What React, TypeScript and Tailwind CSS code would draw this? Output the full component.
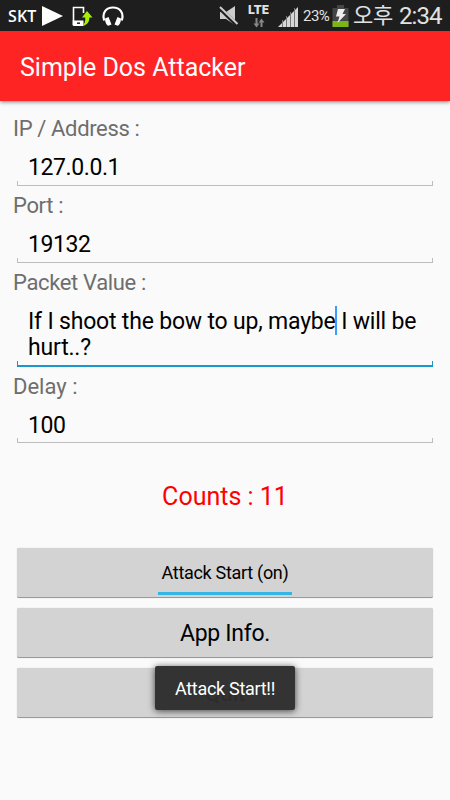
import type { ReactNode } from 'react'
import clsx from 'clsx'

interface FieldProps {
  label: string
  labelClass?: string
  boxClass?: string
  focused?: boolean
  children: ReactNode
}

function StatusBar() {
  return (
    <div className="relative h-[31px] shrink-0 bg-[#1e1e1e] text-[#e2e2e2]">
      <div className="flex h-full items-center pl-[8px]">
        <span className="w-[32px] pt-px font-['Open_Sans',sans-serif] text-[16px] font-semibold leading-none tracking-[0.1px] whitespace-nowrap text-white">SKT</span>
        <svg className="ml-[2px]" width="22" height="22" viewBox="0 0 22 22">
          <path d="M0 1v20l21-10z" fill="#fff" />
        </svg>
        <svg className="ml-[7px]" width="23" height="22" viewBox="0 0 23 22">
          <path d="M2.500 16V2.500h10V8" fill="none" stroke="#fff" strokeWidth="1.600" />
          <path d="M1.500 15.500h11V21h-10l-1-1z" fill="#fff" />
          <path d="M6 18.200h3" stroke="#1e1e1e" strokeWidth="1.500" />
          <path d="M16 6l5.500 6.500h-3.200c.2 4-2 7.800-6.800 8.200 2.300-1.900 3-4.600 2.700-8.200H11z" fill="#a8f000" />
        </svg>
        <svg className="ml-[8px]" width="22" height="22" viewBox="0 0 22 22">
          <path d="M2.200 15.500C-.2 8 4 2.500 11 2.500S22.200 8 19.800 15.500" fill="none" stroke="#fff" strokeWidth="2.200" />
          <path d="M3 13.500l3.500-1.500 3 7.500-3.200 1.300C4.500 20 3 17.500 3 13.500zM19 13.500L15.500 12l-3 7.500 3.200 1.300c1.800-.8 3.300-3.300 3.300-7.300z" fill="#fff" />
        </svg>
      </div>

      <div className="absolute inset-y-0 right-[8px] flex items-center">
        <svg width="22" height="22" viewBox="0 0 22 22">
          <path d="M2 7h6l9-6v19l-9-6H2z" fill="#ccc" />
          <path d="M1 2.500l18 17.500" stroke="#1e1e1e" strokeWidth="4" />
          <path d="M2 2l17.500 17" stroke="#ccc" strokeWidth="2" />
        </svg>
        <div className="ml-[7px] flex w-[23px] flex-col items-center">
          <span className="text-[12.5px] font-black leading-[12px] tracking-[0.2px]">LTE</span>
          <svg className="mt-[2px]" width="12" height="10" viewBox="0 0 12 10">
            <path d="M3.500 0v7M8.500 9V3" stroke="#888" strokeWidth="2" />
            <path d="M.5 5.500h6l-3 4zM5.500 4.500h6l-3-4z" fill="#888" />
          </svg>
        </div>
        <svg className="mt-[2px] ml-[7px]" width="22" height="20" viewBox="0 0 22 20">
          <path d="M1 20L21 0v20z" fill="#d6d6d6" />
          <path d="M5.500 13v7M9.500 9v11M13.500 5v15M17.500 1v19" stroke="#777" strokeWidth="1" />
        </svg>
        <span className="ml-[4px] w-[29px] pt-[2px] text-[15px] leading-none tracking-[-0.5px] whitespace-nowrap">23%</span>
        <svg width="17" height="24" viewBox="0 0 17 24">
          <path d="M5 1h7v3h4.500v19H.5V4H5z" fill="#454545" />
          <path d="M.5 17h16v6H.5z" fill="#7cb518" />
          <path d="M6 5h7l-2.500 5H14L5.500 19l2-6.500H4z" fill="#eee" />
        </svg>
        <span className="ml-[4px] w-[42px] font-['Noto_Sans_CJK_KR',sans-serif] text-[22px] font-normal leading-[33px] tracking-[-0.3px] whitespace-nowrap -translate-y-[2px]">오후</span>
        <span className="ml-[4px] w-[43px] text-[24px] leading-none tracking-[-0.9px] whitespace-nowrap">2:34</span>
      </div>
    </div>
  )
}

function Field({ label, labelClass, boxClass = 'h-[44px] tracking-[-0.4px]', focused, children }: FieldProps) {
  const line = focused ? 'border-[#1996cb]' : 'border-[#bdbdbd]'
  return (
    <div>
      <div className={clsx('pl-[13px] text-[22px] leading-[26px] tracking-[-0.35px] text-[#6e6e6e]', labelClass)}>{label}</div>
      <div className={clsx('relative mx-[17px] pt-[13px] pl-[11px] text-[23px] leading-[26px] text-black', boxClass)}>
        {children}
        <div
          className={clsx(
            'absolute inset-x-0 bottom-0 border-x',
            line,
            focused ? 'h-[6px] border-b-2' : 'h-[5px] border-b'
          )}
        />
      </div>
    </div>
  )
}

function Button({ children }: { children?: ReactNode }) {
  return (
    <button className="relative flex h-[50px] w-full items-center justify-center rounded-[2px] border-b border-[#999] bg-[#d3d3d3] text-[23px] tracking-[-0.3px] text-black shadow-[0_0_1px_#bbb]">
      {children}
    </button>
  )
}

export default function App() {
  return (
    <div className="flex h-[800px] w-[450px] flex-col overflow-hidden bg-[#fafafa] font-[Roboto,'Noto_Sans_CJK_KR',sans-serif]">
      <StatusBar />
      <header className="flex h-[70px] shrink-0 items-center bg-[#ff2424] pl-[20px] pt-[4px] text-[25px] text-white shadow-[0_1px_4px_rgba(0,0,0,0.5)]">
        <h1>Simple Dos Attacker</h1>
      </header>

      <div className="mt-[15px] flex flex-col gap-[7px]">
        <Field label="IP / Address :">127.0.0.1</Field>
        <Field label="Port :" labelClass="tracking-[-0.5px]">19132</Field>
        <Field label="Packet Value :" boxClass="h-[71px] tracking-[-0.19px]" focused>
          If I shoot the bow to up, maybe
          <span className="relative">
            <span className="absolute top-[-2px] left-[-1px] h-[29px] w-[2px] bg-[#3a9cff]" />
          </span>{' '}
          I will be<br />
          hurt..?
        </Field>
        <Field label="Delay :" labelClass="tracking-[0px]" boxClass="h-[43px] tracking-[-0.4px]">100</Field>
      </div>

      <p className="mt-[39px] text-center text-[25px] leading-[30px] text-[#ff0000]">Counts : 11</p>

      <div className="mx-[17px] mt-[36px] flex flex-col gap-[10px]">
        <Button>
          <span className="text-[18px]">Attack Start (on)</span>
          <span className="absolute bottom-[2px] left-[141px] h-[3px] w-[134px] bg-[#33b5e5]" />
        </Button>
        <Button>
          <span className="pt-[3px]">App Info.</span>
        </Button>
        <div className="relative">
          <Button>
            <span className="pt-[3px]">Quit</span>
          </Button>
          <div className="absolute top-[-2px] left-[138px] flex h-[44px] w-[140px] items-center justify-center rounded-[2px] bg-[#2d2d2d]/97 text-[18px] tracking-[-0.3px] text-white shadow-[0_1px_7px_rgba(0,0,0,0.7)]">
            Attack Start!!
          </div>
        </div>
      </div>
    </div>
  )
}
